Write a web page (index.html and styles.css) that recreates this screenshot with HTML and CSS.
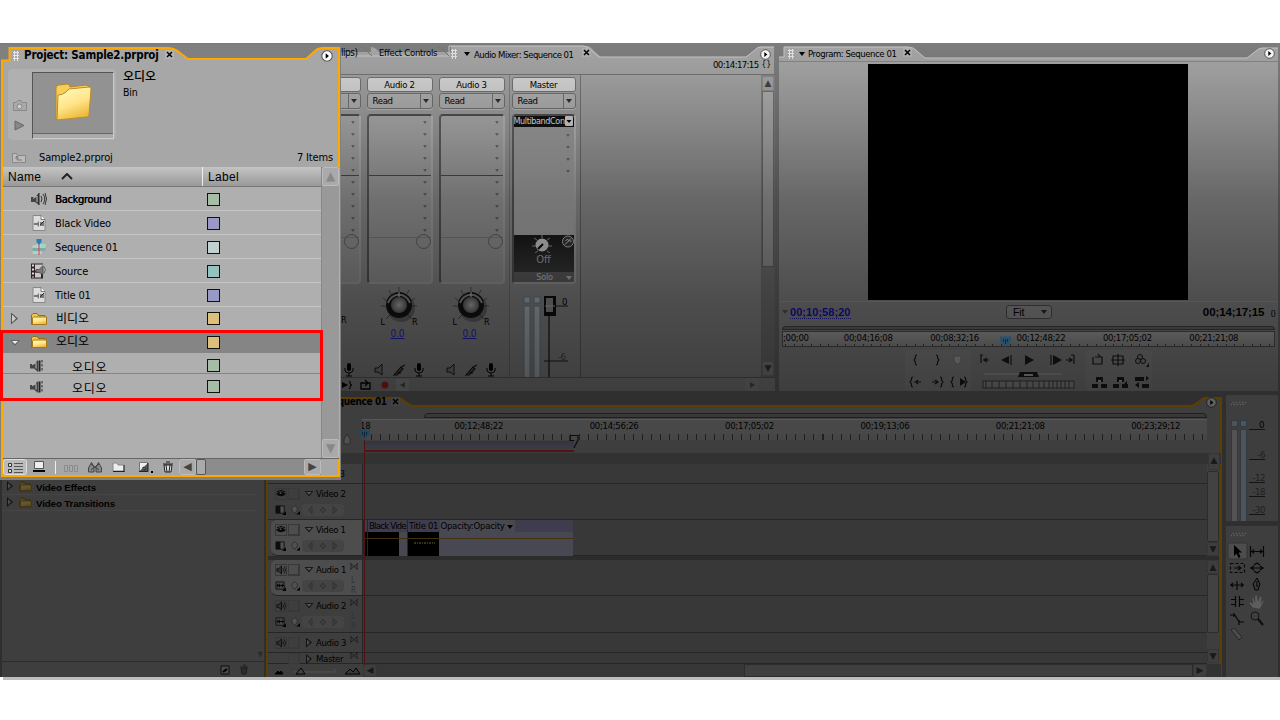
FILE: index.html
```html
<!DOCTYPE html>
<html lang="ko">
<head>
<meta charset="utf-8">
<title>Sample2.prproj</title>
<link rel="stylesheet" href="styles.css">
</head>
<body>
<svg class="defs" width="0" height="0">
  <defs>
    <linearGradient id="gold" x1="0" y1="0" x2="0.4" y2="1"><stop offset="0" stop-color="#fffcc0"/><stop offset=".6" stop-color="#ffe58a"/><stop offset="1" stop-color="#eebc3e"/></linearGradient>
    <radialGradient id="knobface"><stop offset="0" stop-color="#ddd"/><stop offset="1" stop-color="#777"/></radialGradient>
  </defs>
  <symbol id="folder" viewBox="0 0 16 14"><path d="M.5 12.5V3L2 1.500h4L7.500 3.500H14V12.500z" fill="#f0c64f" stroke="#9a6c10"/><path d="M1.500 12.500V6l1-1H15.500V12.500z" fill="url(#gold)" stroke="#a87818"/></symbol>
  <symbol id="speaker" viewBox="0 0 16 14"><path d="M0 5h4l4-4v12L4 10H0z" fill="#444"/><path d="M8 1v12" stroke="#222"/><path d="M2 6.500l4-2.500v6" fill="none" stroke="#bbb"/><path d="M10 4q2 3 0 6M12 2q3.500 5 0 10M14 1q3 6 0 12" fill="none" stroke="#333"/></symbol>
  <symbol id="spk" viewBox="0 0 14 14"><path d="M0 5h4l4-4v12L4 9.500H0z" fill="#444"/><path d="M2 6l4-2.500v6" fill="none" stroke="#bbb"/><path d="M9.500 1.500v11" stroke="#222" stroke-width="2"/><path d="M12 1v12" stroke="#555" stroke-width="1.500" stroke-dasharray="2.500 1.500"/></symbol>
  <symbol id="doc" viewBox="0 0 14 16"><path d="M1 .5H9L13 4.500V15.500H1z" fill="#ddd" stroke="#888"/><path d="M9 .5V4.500H13" fill="#fff" stroke="#777"/><path d="M2 8h3l2-2v6l-2-2H2zM8 7h4v4H8z" fill="#777"/><path d="M8 10l4-4" stroke="#333"/></symbol>
  <symbol id="seq" viewBox="0 0 15 16"><path d="M1 6h4v3H1zM10 5h4v4h-4zM1 12h4v3H1z" fill="#9db"/><path d="M5 5h5v10H5z" fill="#bdd0d3"/><path d="M1 9h13v3H1z" fill="#87a6a8"/><path d="M7.500 4v12" stroke="#c44"/><path d="M5 0h5v3L7.500 6 5 3z" fill="#247fba"/></symbol>
  <symbol id="film" viewBox="0 0 16 15"><path d="M0 0h12v15H0z" fill="#322"/><path d="M1 1h2v2H1zM1 5h2v2H1zM1 9h2v2H1zM1 13h2v1H1z" fill="#ddd"/><path d="M4 1h8v6H4zM4 9h6v5H4z" fill="#c9c9c9"/><path d="M5 6h3l4-4v9L8 9H5z" fill="#777" stroke="#444" stroke-width=".7"/><path d="M13 3q3 3 0 7" fill="none" stroke="#666"/></symbol>
  <symbol id="eye" viewBox="0 0 11 10"><path d="M0 5q5.500-5.500 11 0-5.500 5-11 0z" fill="#1a1a1a"/><circle cx="5" cy="4" r="1" fill="#ddd"/><path d="M1 2.500q4.500-3 9 0" fill="none" stroke="#111"/></symbol>
  <symbol id="snd" viewBox="0 0 11 10"><path d="M1 3.500h2l3-3v9l-3-3H1z" fill="#888" stroke="#222"/><path d="M7.500 3q1.500 2 0 4M9 1q3 4 0 8" fill="none" stroke="#333"/></symbol>
  <symbol id="disp" viewBox="0 0 12 11"><path d="M1 1h9v8H1z" fill="#ddd" stroke="#222"/><path d="M1 1h5v8H1z" fill="#222"/><path d="M12 7v4H8z"/></symbol>
  <symbol id="wave" viewBox="0 0 12 11"><path d="M1 1h9v8H1z" fill="#ccc" stroke="#222"/><path d="M2 5h8M3 3v4M5 3v4M8 3v4" stroke="#000"/><path d="M12 7v4H8z"/></symbol>
  <symbol id="key" viewBox="0 0 10 10"><path d="M4 0l3 3v2L4 9 1 5V3z" fill="#ddd" stroke="#555" stroke-width=".7"/><path d="M10 6v4H6z"/></symbol>
  <symbol id="keys" viewBox="0 0 42 12"><rect width="42" height="12" rx="4" fill="#b8b8b8"/><path d="M10 2v8L6 6zM31 2v8l4-4zM21 3l3 3-3 3-3-3z" fill="#a4a4a4" stroke="#8a8a8a"/></symbol>
  <symbol id="bow" viewBox="0 0 8 7"><path d="M0 0l8 7M8 0L0 7M1 1v5M7 1v5" fill="none" stroke="#444" stroke-width=".8"/></symbol>
  <symbol id="go" viewBox="0 0 11 11"><circle cx="5.500" cy="5.500" r="4.800" fill="#fff" stroke="#555"/><path d="M4.300 3v5l3-2.500z"/></symbol>
  <symbol id="close" viewBox="0 0 9 9"><rect width="9" height="9" rx="1" fill="#b4b4b4"/><path d="M2 2l5 5M7 2L2 7" stroke="#000" stroke-width="1.500"/></symbol>
  <symbol id="knob" viewBox="0 0 50 44"><g stroke="#444" stroke-width=".7"><path d="M25 1v6M15 4l2 4M35 4l-2 4M9 12l4 3M41 12l-4 3M7 20h5M38 20h5M12 33l4-4M38 33l-4-4"/></g><circle cx="27" cy="22" r="14" fill="#000" opacity=".25"/><circle cx="25" cy="19" r="13" fill="#181818"/><path d="M14 17a11.500 11.500 0 0 1 22 0" fill="none" stroke="#aaa" stroke-width="2"/><circle cx="25" cy="19" r="8" fill="url(#knobface)"/><path d="M25 6v5" stroke="#eee" stroke-width="1.200"/></symbol>
  <symbol id="mini" viewBox="0 0 64 14"><path d="M8 5h3l4-4v11l-4-3H8z" fill="#999" stroke="#222"/><path d="M27 12l7-8 2 2-6 6zM34 4l4-2M31 9l3 1" stroke="#111" stroke-width="1.100" fill="#777"/><rect x="50" y="0" width="4" height="8" rx="2"/><path d="M48 5v3q4 4 8 0V5M52 10v3M49 13h6" fill="none" stroke="#000"/></symbol>
  <symbol id="head" viewBox="0 0 11 12"><path d="M0 1l3 1 2.500-1L8 2l3-1v5.500L5.500 12 0 6.500z" fill="#62bfff"/><path d="M3.500 4v3M5.500 4v5M7.500 4v3" stroke="#1a5285" stroke-width=".8"/></symbol>
  <symbol id="grip" viewBox="0 0 18 5"><path d="M1 4l1-1M4 4l1-1M7 4l1-1M10 4l1-1M13 4l1-1M3 2l1-1M6 2l1-1M9 2l1-1M12 2l1-1M15 2l1-1" stroke="#fff" stroke-width="1.300"/></symbol>
</svg>

<main class="stage">
  <div class="workspace">
    <div class="upper">
      <section class="mixer">
        <svg class="outline" width="434" height="348"><path d="M0 9H30V4q4 0 8 5H110V3H245q5 0 8 5l7 6H405l9-7q2-3 6-3H433V348H0z" fill="#a8a8a8"/><path d="M0 13h108V3H242q4 0 8 4l8 7H405l9-7q2-3 6-3H433" fill="none" stroke="#ccc"/><path d="M20 4q4 0 6 4l5 5M97 4q4 0 6 4l5 5" fill="none" stroke="#777"/></svg>
        <div class="tabs"><span class="clips">lips)</span><span class="fxc">Effect Controls</span><i class="dots"></i><i class="down dark"></i><span class="amix">Audio Mixer: Sequence 01</span><svg class="x"><use href="#close"/></svg><svg class="menu"><use href="#go"/></svg></div>
        <div class="mtime"><span>00:14:17:15</span><small>{ }</small></div>
        <div class="mbody">
          <div class="strip partial"><div class="name"></div><div class="read"><i class="down"></i></div><div class="inserts"><div class="arrows"><i></i><i></i><i></i><i></i><i></i></div><div class="arrows sends"><i></i><i></i><i></i><i></i><i></i></div><div class="pan"><b></b></div></div><div class="pr">R</div><svg class="micp" viewBox="44 0 20 14"><use href="#mini" width="64" height="14"/></svg></div>
          <div class="strip"><div class="name">Audio 2</div><div class="read">Read<i class="down"></i></div><div class="inserts"><div class="arrows"><i></i><i></i><i></i><i></i><i></i></div><div class="arrows sends"><i></i><i></i><i></i><i></i><i></i></div><div class="pan"><b></b></div></div><svg class="knob"><use href="#knob"/></svg><div class="lr"><span>L</span><span>R</span></div><div class="val">0.0</div><svg class="mini"><use href="#mini"/></svg></div>
          <div class="strip"><div class="name">Audio 3</div><div class="read">Read<i class="down"></i></div><div class="inserts"><div class="arrows"><i></i><i></i><i></i><i></i><i></i></div><div class="arrows sends"><i></i><i></i><i></i><i></i><i></i></div><div class="pan"><b></b></div></div><svg class="knob"><use href="#knob"/></svg><div class="lr"><span>L</span><span>R</span></div><div class="val">0.0</div><svg class="mini"><use href="#mini"/></svg></div>
          <div class="master"><div class="name">Master</div><div class="read">Read<i class="down"></i></div>
            <div class="inserts"><div class="fx"><span>MultibandCon</span><svg width="8" height="10"><rect width="8" height="10" rx="1" fill="#ddd"/><path d="M1.500 4h5L4 7z"/></svg></div><div class="arrows"><i></i><i></i><i></i><i></i></div><div class="solo"><svg width="62" height="18"><g stroke="#bbb"><path d="M29 0v3M21 3l3 2M37 3l-3 2M19 11h4M35 11h4M22 18l3-2M37 18l-3-2"/></g><circle cx="29" cy="10" r="6.500" fill="#fff"/><path d="M25 14l5-5" stroke="#000" stroke-width="2"/><circle cx="55" cy="6.500" r="5.500" fill="#444" stroke="#ddd"/><path d="M52 9.500l6-6M52.500 6q2-3 3-1t3 1" stroke="#fff" fill="none"/></svg><span>Off</span><em>Solo<i class="down"></i></em></div></div>
            <svg class="meter" width="66" height="82"><g fill="#ddd" stroke="#789cb9"><rect x="12" y="1" width="6" height="6"/><rect x="22" y="1" width="6" height="6"/><rect x="12" y="10" width="6" height="80"/><rect x="22" y="10" width="6" height="80"/></g><path d="M37 0v82" stroke="#333" stroke-width="1.500"/><path d="M39 10h17M32 65h24" stroke="#222"/><rect x="32" y="-1" width="12" height="21" fill="#111"/><rect x="34" y="2" width="7" height="14" fill="#aaa"/><path d="M33 10h10" stroke="#ddd"/><text x="50" y="9">0</text><text x="46" y="64" fill="#555">-6</text></svg>
          </div>
          <div class="blank"></div>
          <div class="vs"><b>▲</b><i></i><b>▼</b></div>
        </div>
        <div class="mfoot"><svg width="90" height="14"><path d="M1 4l6 3-6 3z"/><path d="M8 3q2 0 1 3l2 1-2 1q1 3-1 3" stroke="#000" fill="none"/><path d="M24 5h-4v6h9V5h-3M22 5h4M24 2l3 3-3 3" fill="none" stroke="#000" stroke-width="1.300"/><circle cx="44" cy="7" r="3.500" fill="#d52828"/><rect x="55" y="1" width="13" height="12" rx="2" fill="#b8b8b8"/><path d="M64 4v6l-5-3z" fill="#666"/></svg><span></span><svg width="30" height="14"><rect width="14" height="13" rx="2" fill="#b0b0b0"/><path d="M5 4v6l5-3z" fill="#666"/></svg></div>
      </section>
      <section class="program">
        <svg class="outline" width="499" height="348"><path d="M0 14H5V4H129q6 0 10 5l7 6H468l9-7q3-3 6-3H499V348H0z" fill="#a8a8a8"/><path d="M0 14H5V4H129q6 0 10 5l7 6H468l9-7q3-3 6-3H499" fill="none" stroke="#ccc"/></svg>
        <div class="tabs"><i class="dots"></i><i class="down dark"></i><span>Program: Sequence 01</span><svg class="x"><use href="#close"/></svg><svg class="menu"><use href="#go"/></svg></div>
        <div class="view"><div class="screen"></div></div>
        <div class="ptime"><i class="down"></i><a>00;10;58;20</a><div class="fit">Fit<i class="down"></i></div><strong>00;14;17;15</strong><small>{ }</small></div>
        <div class="pbar"></div>
        <div class="pruler"><span>;00;00</span><span>00;04;16;08</span><span>00;08;32;16</span><span>00;12;48;22</span><span>00;17;05;02</span><span>00;21;21;08</span><svg class="phead"><use href="#head"/></svg></div>
        <svg class="transport" width="250" height="41">
          <g fill="#b0b0b0"><rect width="66" height="41" rx="4"/><rect x="181" width="66" height="41" rx="4"/></g>
          <g fill="none" stroke="#222" stroke-width="1.200"><path d="M12 5q-2 0-1.500 3l-1.500 2 1.500 2q-.5 3 1.500 3M31 5q2 0 1.500 3l1.500 2-1.500 2q.5 3-1.500 3M8 27q-2 0-1.500 3L5 32l1.500 2Q6 37 8 37M9 32h7M13 30l-2 2 2 2M27 32h6M30 30l3 2-3 2M35 27q2 0 1.500 3l1.500 2-1.500 2q.5 3-1.500 3M49 27q-2 0-1.500 3L46 32l1.500 2q-.5 3 1.500 3M59 27q2 0 1.500 3l1.500 2-1.500 2q.5 3-1.500 3M75 5h3M76 5v8M78 10h6M82 8l-3 2 3 2M161 10h6M164 8l3 2-3 2M169 5v9M166 5h3M146 5v10M106 5v10"/><path d="M188 7v7h9V7h-3M190 7h5l-2-3M208 6h10v8h-10zM206 10h14M213 4v12"/></g>
          <g fill="#222"><path d="M55 28v8l6-4zM104 6v8l-8-4zM120 5v10l9-5zM148 5v10l9-5zM241 17h3v-4zM187 34h6v4h-6zM196 34h6v4h-6zM191 27h7v5h-7zM208 34h6v4h-6zM217 34h6v4h-6zM212 27h7v5h-7zM222 31v6l-3-3zM230 27h9v4h-9zM237 34h7v4h-7zM241 26l3 2-3 3zM234 32v6l-4-3z"/></g>
          <path d="M193 30h3v2h-3zM214 30h3v2h-3z" fill="#ddd"/>
          <path d="M49 6h7v5l-3.500 4-3.500-4z" fill="#ddd" stroke="#999"/><g fill="#aaa" stroke="#222"><circle cx="235" cy="7" r="2.500"/><circle cx="233" cy="11" r="2.500"/><circle cx="238" cy="11" r="2.500"/></g>
          <path d="M79 24h78" stroke="#ccc" stroke-width="1.500"/><path d="M113 27l2-5h17l2 5z" fill="#222"/><path d="M119 25h9" stroke="#ddd" stroke-width="2"/>
          <rect x="78" y="31" width="91" height="7" fill="#bbb" stroke="#555"/><path d="M81 31v7M87 31v7M94 31v7M101 31v7M108 31v7M115 31v7M122 31v7M128 31v7M134 31v7M139 31v7M144 31v7M148 31v7M152 31v7M156 31v7M160 31v7M164 31v7" stroke="#555"/>
        </svg>
      </section>
    </div>
    <div class="lower">
      <section class="effects">
        <div class="frow"><i class="tri"></i><svg><use href="#folder"/></svg>Video Effects</div>
        <div class="frow"><i class="tri"></i><svg><use href="#folder"/></svg>Video Transitions</div>
        <div class="fblank"><b>▼</b></div>
        <div class="ffoot"><svg width="32" height="12"><path d="M2 2h8v8H2z" fill="#ccc" stroke="#222"/><path d="M4 8l4-3" stroke="#000" stroke-width="2"/><path d="M22 4h6l-1 6h-4zM21 3h8M24 1h3" fill="#777" stroke="#555"/></svg></div>
      </section>
      <section class="timeline">
        <svg class="outline" width="957" height="283"><path d="M1 283V3H131q4 0 8 4l7 4H924q4 0 7-3l4-3q2-2 5-2H955V283" fill="#a8a8a8" stroke="#ffa800" stroke-width="2"/></svg>
        <div class="ttab"><span>Sequence 01</span><svg class="x"><use href="#close"/></svg><svg class="menu"><use href="#go"/></svg></div>
        <div class="truler">
          <div class="trleft"><svg width="8" height="12"><path d="M4 1l3 5v5H1V6z" fill="#ddd" stroke="#777"/></svg></div>
          <div class="trmain"><div class="zoombar"></div><div class="labels"><em>18</em><span>00;12;48;22</span><span>00;14;56;26</span><span>00;17;05;02</span><span>00;19;13;06</span><span>00;21;21;08</span><span>00;23;29;12</span></div><div class="ticks"></div><div class="work"></div></div>
        </div>
        <div class="tband"><b>▲</b></div>
        <div class="tracks">
          <div class="heads">
            <div class="th v3"><span>Video 3</span></div>
            <div class="th v2"><svg class="ic"><use href="#eye"/></svg><u></u><i class="open"></i><span>Video 2</span><div class="sub"><svg class="ds"><use href="#disp"/></svg><svg class="ky"><use href="#key"/></svg><svg class="ks"><use href="#keys"/></svg></div></div>
            <div class="th v1 lit"><svg class="ic"><use href="#eye"/></svg><u></u><i class="open"></i><span>Video 1</span><div class="sub"><svg class="ds"><use href="#disp"/></svg><svg class="ky"><use href="#key"/></svg><svg class="ks"><use href="#keys"/></svg></div></div>
            <div class="split"></div>
            <div class="th a1 lit"><svg class="ic"><use href="#snd"/></svg><u></u><i class="open"></i><span>Audio 1</span><svg class="bow"><use href="#bow"/></svg><div class="sub"><svg class="ds"><use href="#wave"/></svg><svg class="ky"><use href="#key"/></svg><svg class="ks"><use href="#keys"/></svg><small>L<br>R</small></div></div>
            <div class="th a2"><svg class="ic"><use href="#snd"/></svg><u></u><i class="open"></i><span>Audio 2</span><svg class="bow"><use href="#bow"/></svg><div class="sub"><svg class="ds"><use href="#wave"/></svg><svg class="ky"><use href="#key"/></svg><svg class="ks"><use href="#keys"/></svg><small>L<br>R</small></div></div>
            <div class="th a3"><svg class="ic"><use href="#snd"/></svg><u></u><i class="tri"></i><span>Audio 3</span><svg class="bow"><use href="#bow"/></svg></div>
            <div class="th ms"><svg class="ic none"></svg><u></u><i class="tri"></i><span>Master</span><svg class="bow"><use href="#bow"/></svg></div>
          </div>
          <div class="lanes"><div class="v3"></div><div class="v2"></div><div class="v1"><div class="clip c0"></div><div class="clip c1"><span>Black Vide</span><b></b></div><div class="clip c2"><span>Title 01 <mark>Opacity:Opacity<i class="down dark"></i></mark></span><b><svg width="31" height="24"><path d="M6 11h21" stroke="#8f8d35" stroke-width="2" stroke-dasharray="2 1 1 1"/></svg></b></div></div><div class="split"></div><div class="a1"></div><div class="a2"></div><div class="a3"></div><div class="ms"></div></div>
          <div class="tscroll"><i class="t1"></i><b>▼</b><div class="split"></div><b>▲</b><i class="t2"></i><span></span><b>▼</b></div>
        </div>
        <div class="tfoot"><svg width="95" height="13"><path d="M7 10l3-3 2 2 1-2 2 3z" stroke="#000"/><path d="M26 8h41V5" fill="none" stroke="#ddd"/><path d="M28 10l5-6 4 6z" fill="#bbb" stroke="#000"/><path d="M77 10l5-5 3 3 3-4 4 6z" fill="#999" stroke="#000"/></svg><b>◀</b><span></span><i></i><b>▶</b></div>
        <svg class="cursor" width="11" height="237"><path d="M5.500 11V237" stroke="#d53030"/><use href="#head" width="11" height="12"/></svg>
        <svg class="workend" width="10" height="14"><path d="M1 .5h8V5L5 13M1 .5v5h4" fill="none" stroke="#222" stroke-width="1.200"/></svg>
      </section>
      <aside class="side">
        <div class="vu"><svg width="52" height="126"><use href="#grip" x="4" y="6" width="18" height="5"/><g fill="#e0e0e0" stroke="#7a9ec0"><rect x="5.500" y="25.500" width="6" height="6"/><rect x="14.500" y="25.500" width="6" height="6"/><rect x="5.500" y="34.500" width="6" height="100"/><rect x="14.500" y="34.500" width="6" height="100"/></g><path d="M23 34.500h16M23 64.500h16M23 87.500h16M23 101.500h16M23 119.500h16" stroke="#333"/><g text-anchor="end"><text x="38" y="33">0</text><g fill="#555"><text x="39" y="63">-6</text><text x="39" y="86">-12</text><text x="39" y="100">-18</text><text x="39" y="118">-30</text></g></g></svg></div>
        <div class="tools"><svg width="52" height="151"><use href="#grip" x="4" y="6" width="18" height="5"/><rect x="2" y="17" width="19" height="16" rx="1" fill="#d0d0d0" stroke="#888"/><path d="M8 19v11l2.500-2.500 2 4.500 2-1-2-4.500h3.500z"/>
          <g fill="none" stroke="#111" stroke-width="1.200"><path d="M24.500 20v11M37.500 20v11M25 25.500h12M28 23.500l-2 2 2 2M34 23.500l2 2-2 2"/><path d="M4.500 37.500h14v9H4.500z" stroke-dasharray="3 2"/><path d="M8 42h7M12 40l3 2-3 2M24 42h14M28 40l-3 2 3 2M34 40l3 2-3 2M28 39l3-2 3 2M28 45l3 2 3-2M4 59h14M11 55v9M7 57l-2 2 2 2M15 57l2 2-2 2"/><path d="M5 73.500h4M13 73.500h5M5 78.500h4M13 78.500h5M9.500 70v11M13.500 70v11M4 89h5l4 7h5M8 87v4M13 94v5"/></g>
          <path d="M31 52l3 6-2 6h-3l-2-6z" fill="#999" stroke="#000"/><path d="M31 55v6" stroke="#000"/><path d="M27 82l-4-5 2-1 2 2-1-7 2 1 1 4V69h2l1 6 2-5 2 1-1 6 2-3 1 1-4 8z" fill="#fff" stroke="#888" stroke-width=".4"/><circle cx="29" cy="90" r="4" fill="#aaa" stroke="#333"/><path d="M32 93l5 6" stroke="#222" stroke-width="2"/><path d="M5 104l3-2 8 9-3 3z" fill="#ccc" stroke="#666"/></svg></div>
      </aside>
    </div>
    <div class="shade"></div>
  </div>

  <section class="bin">
    <svg class="outline" width="342" height="437"><path d="M0 2H341V437H0z" fill="#808080"/><path d="M2 433V17.500H9.500V5H166q9 0 14 5l8 6H306l9-8q3-3 8-3H339V433z" fill="#a7a7a7" stroke="#ffa800" stroke-width="2"/></svg>
    <div class="btitle"><i class="dots"></i><span>Project: Sample2.prproj</span><svg class="x"><use href="#close"/></svg><svg class="menu"><use href="#go"/></svg></div>
    <div class="preview">
      <div class="pframe"><svg width="22" height="66"><g fill="#aaa" stroke="#888"><path d="M3.500 30.500H6l2-2h3l1 2h4.500v8h-13z"/><circle cx="9.500" cy="34.500" r="2.500" fill="#ccc"/><path d="M5 49v9l9-4.500z" fill="#888" stroke="#666"/></g></svg>
      <div class="thumb"><svg width="80" height="60" viewBox="0 0 80 60"><path d="M23 46V15q0-3 3-3l8-1q3 0 3 3l16-2q3 0 3 3v23L24 47z" fill="#f3cf59" stroke="#bb8525"/><path d="M24 47l1-25q5 0 8-3l3-3 20-2q2 0 2 2l-2 26q0 2-3 2z" fill="url(#gold)" stroke="#bd8b2a"/></svg><i></i></div></div>
      <div class="binfo"><b>오디오</b><span>Bin</span></div>
    </div>
    <div class="path"><svg width="16" height="13"><path d="M1.500 11.500V2.500h4l1 2h8v7z" fill="#bbb" stroke="#888"/><path d="M6 9h5M6 9V6M4.500 7.500L6 5l1.500 2.500" fill="none" stroke="#777"/></svg><span>Sample2.prproj</span><em>7 Items</em></div>
    <div class="list">
      <div class="rows">
        <div class="hdr"><span>Name<svg width="12" height="7"><path d="M1 6l5-5 5 5" fill="none" stroke="#222" stroke-width="2"/></svg></span><span>Label</span></div>
        <div class="row"><svg><use href="#speaker"/></svg><b>Background</b><i class="g"></i></div>
        <div class="row"><svg><use href="#doc"/></svg><span>Black Video</span><i class="p"></i></div>
        <div class="row"><svg><use href="#seq"/></svg><span>Sequence 01</span><i class="l"></i></div>
        <div class="row"><svg><use href="#film"/></svg><span>Source</span><i class="t"></i></div>
        <div class="row"><svg><use href="#doc"/></svg><span>Title 01</span><i class="p"></i></div>
        <div class="row folderrow"><i class="tri"></i><svg><use href="#folder"/></svg><span>비디오</span><i class="o"></i></div>
        <div class="row folderrow sel"><i class="open"></i><svg><use href="#folder"/></svg><span>오디오</span><i class="o"></i></div>
        <div class="row kid"><svg><use href="#spk"/></svg><span>오디오</span><i class="g"></i></div>
        <div class="row kid"><svg><use href="#spk"/></svg><span>오디오</span><i class="g"></i></div>
      </div>
      <div class="bscroll"><b>▲</b><b>▼</b></div>
    </div>
    <div class="bfoot"><svg width="175" height="17"><rect x=".5" y=".5" width="23" height="15" rx="2" fill="#bbb" stroke="#ddd"/><path d="M5.500 4.500h3v3h-3zM5.500 10.500h3v3h-3z" fill="#ddd" stroke="#333"/><path d="M11 4.500h9M11 7.500h9M11 10.500h9M11 13.500h9" stroke="#555"/><path d="M31.500 2.500h9v7h-9z" fill="#eee" stroke="#555"/><path d="M30 12h12" stroke="#000" stroke-width="2"/><path d="M52.500 2v13" stroke="#eee"/><path d="M61.500 6.500h3v6h-3zM66.500 6.500h3v6h-3zM71.500 6.500h3v6h-3z" fill="#aaa" stroke="#8a8a8a"/><path d="M85.500 13V9l3-5.500L91 8v5zM93 13V8l2.500-4.500 3 5.500v4zM88 5l8 6M96 5l-8 6" fill="#888" stroke="#444"/><path d="M110 4h4l1 2h6v6h-11z" fill="#eee" stroke="#888"/><path d="M110 12.500h11.500M121 6v7" stroke="#222"/><path d="M136.500 3.500h8v9h-8z" fill="#eee" stroke="#777"/><path d="M136 12.500h9V4M140 8l2 1v2l-2-1z" stroke="#222" fill="#555"/><path d="M148 12h2v2h-2z"/><path d="M161 6h8l-1 7h-6zM160 5h10M163 3h4" fill="#ddd" stroke="#222"/><path d="M163 6l1 7M167 6l-1 7" stroke="#222"/></svg><div class="hs"><b>◀</b><i></i><span></span><b>▶</b></div></div>
    <div class="redbox"></div>
  </section>
</main>
</body>
</html>
```
FILE: styles.css
```css
*{box-sizing:border-box}
body{margin:0;width:1280px;height:720px;background:#fff;overflow:hidden;font:11px "DejaVu Sans Condensed","DejaVu Sans","Noto Sans CJK KR",sans-serif;font-stretch:condensed;color:#000;letter-spacing:-.15px;white-space:nowrap}
svg{display:block;flex:none}
svg text{font-size:9.500px;letter-spacing:-.5px}
.defs{position:absolute}
i,em{font-style:normal}
.stage{position:relative;margin-top:43px;height:637px;background:linear-gradient(90deg,#fff 3px,#bfbcc0 3px)}
.workspace{position:relative;height:634px;background:#7f7f7f;overflow:hidden}
.shade{position:absolute;inset:0;background:linear-gradient(rgba(0,0,0,.02),rgba(0,0,0,.07) 27px,rgba(0,0,0,.22) 90px,rgba(0,0,0,.39) 157px,rgba(0,0,0,.54) 257px,rgba(0,0,0,.63) 345px)}
.outline{position:absolute;left:0;top:0;z-index:0}
.upper{display:flex;gap:4px;height:352px;padding-left:341px}
.mixer,.program{position:relative;height:348px;display:flex;flex-direction:column}
.mixer{width:434px}
.program{width:499px}
.mixer>div,.program>div,.transport,.timeline>div,.bin>div{position:relative;flex:none}
.tabs{display:flex;align-items:center;height:18px;padding-top:4px;font-size:10px;letter-spacing:-.5px}
.clips{width:38px;margin-top:-3px}
.fxc{width:72px;margin-top:-3px;font-size:9.500px;letter-spacing:-.3px}
.dots{width:6px;height:10px;background:radial-gradient(circle,#e8e8e8 1px,transparent 1.2px) 0 0/3px 3px}
.down{display:inline-block;border:3px solid transparent;border-top:4px solid #333;border-bottom:0}
.down.dark{border-top-color:#000}
.mixer .down.dark{margin:0 4px 0 7px}
.amix{width:103px;font-size:9.500px}
.x{width:9px;height:9px;margin-left:5px;margin-top:-3px}
.menu{width:11px;height:11px;margin-left:auto}
.mixer .menu{margin-right:4px}
.mtime{height:14px;border-bottom:1px solid #777;display:flex;justify-content:flex-end;align-items:flex-start;gap:3px;font-size:9.500px;line-height:8px;letter-spacing:-.6px;padding-right:5px}
small{font-size:8px;letter-spacing:-1px}
.mbody{display:flex;height:302px}
.strip,.master{width:66px;padding-top:2px;display:flex;flex-direction:column;margin-right:6px}
.strip.partial{width:19.500px;margin-right:6px}
.name{height:15px;border:1px solid #777;border-radius:3px;background:#dcdcdc;text-align:center;line-height:13px;font-size:9.500px;letter-spacing:-.3px;flex:none}
.read{height:16px;margin-top:1px;border:1px solid #777;border-radius:3px;line-height:13px;padding-left:5px;display:flex;justify-content:space-between;font-size:9.500px;letter-spacing:-.3px;flex:none;box-shadow:0 1px #c4c4c4;background:linear-gradient(90deg,transparent calc(100% - 12px),#777 0 calc(100% - 11px),transparent 0),#b8b8b8}
.read .down{margin:5px 3px 0 0}
.strip.partial .name,.strip.partial .read{border-left:0;border-radius:0 3px 3px 0;justify-content:flex-end}
.inserts{height:170px;margin-top:5px;border:2px solid #c4c4c4;border-left:2px solid #666;border-top-color:#555;border-radius:4px;background:#b6b6b6;flex:none;overflow:hidden}
.arrows{height:59px;padding:5px 4px 0 0;display:flex;flex-direction:column;align-items:flex-end;gap:9px}
.arrows i{border:2px solid transparent;border-top:3px solid #777;border-bottom:0}
.arrows.sends{height:62px;border-top:1px solid #555}
.pan{border-top:1px solid #999;display:flex;justify-content:flex-end}
.pan b{width:15px;height:15px;border:1px solid #777;border-radius:50%;margin-top:-4px}
.strip.partial .inserts{border-left:0;border-radius:0 4px 4px 0}
.pr{text-align:left;padding-top:31px;font-size:9px;height:79px}
.micp{width:20px;height:14px}
.knob{width:50px;height:44px;margin:2px 0 0 7px}
.lr{display:flex;justify-content:space-between;padding:0 15px 0 14px;font-size:9px;line-height:10px;margin-top:-13px}
.val{color:#2a2af0;text-decoration:underline;text-align:center;padding:0 4px 0 0;line-height:13px;font-size:10px;height:39px}
.mini{width:64px;height:14px}
.master{padding-left:2px;margin:0 2px 0 -2px;border-left:1px solid #888;border-right:1px solid #777;width:72px;padding-right:4px}
.master .inserts{background:linear-gradient(#a4a4a4,#ddd)}
.fx{height:12px;background:#111;color:#eee;display:flex;font-size:9px;line-height:12px;align-items:center;justify-content:space-between;padding-right:1px;margin-top:-1px;letter-spacing:-.4px}
.master .arrows{height:108px;flex:none}
.master .arrows{padding-top:7px}
.solo{height:48px;background:linear-gradient(#202020,#505050);color:#ccc;display:flex;flex-direction:column;align-items:center}
.solo span{line-height:14px}
.solo em{width:100%;background:#757575;margin-top:5px;font-size:9px;line-height:11px;text-align:center;color:#eee;padding-left:12px}
.solo .down{float:right;margin:4px 2px;border-top-color:#ddd}
.meter{margin-top:12px;overflow:hidden}
.blank{flex:1}
.vs{width:14px;display:flex;flex-direction:column;background:#8d8d8d;border:1px solid #888}
.vs b,.bscroll b,.tscroll b,.tband b,.tfoot b,.hs b{font:9px/13px "DejaVu Sans";text-align:center;color:#444;background:#a8a8a8;border:1px solid #909090;border-radius:2px;flex:none}
.vs i{height:176px;background:#b4b4b4;border:1px solid #777}
.vs b:last-child{margin-top:auto}
.mfoot{height:14px;border-top:1px solid #777;display:flex;background:#a8a8a8}
.mfoot span{flex:1}
.program .tabs{padding:3px 2px 0 9px;height:19px;border-bottom:1px solid #888}
.program .tabs span{font-size:9.500px;width:90px;letter-spacing:-.45px}
.program .down.dark{margin:0 3px 0 5px}
.program .tabs .menu{margin-right:1px;margin-top:0}
.view{height:240px;padding:2px 0 0 89px;border-bottom:1px solid #bbb}
.screen{width:320px;height:236px;background:#000}
.ptime{height:20px;display:flex;align-items:center;padding:0 3px 0 3px;font-family:"Liberation Sans";letter-spacing:-.1px}
.ptime a{font:bold 11px "Liberation Sans";color:#2012d8;margin-left:2px;border-bottom:1px dotted #22c;width:61px;letter-spacing:.05px}
.ptime>.down{border-top-color:#666}
.fit{width:46px;height:14px;margin-left:155px;border:1px solid #666;border-radius:3px;background:#b8b8b8;display:flex;justify-content:space-between;padding:0 4px 0 6px;line-height:12px;align-items:center;font-size:10.500px}
.ptime strong{margin-left:auto;font-size:11.500px;margin-right:6px}
.pbar{height:4px;margin:4px 3px 0;background:#888;border:1px solid #555;border-radius:4px 4px 0 0}
.pruler{height:16px;margin:1px 3px 0;display:flex;border:1px solid #666;background:repeating-linear-gradient(90deg,#555 0 1px,transparent 1px 8.64px) 2px 100%/100% 2px no-repeat,linear-gradient(#d2d2d2,#b8b8b8)}
.pruler span{width:86.400px;text-align:center;font-size:9.500px;line-height:11px;flex:none;letter-spacing:-.3px}
.pruler span:first-child{width:42px;text-align:left}
.phead{position:absolute;left:217px;top:3px;width:11px;height:12px}
.transport{margin:3px 0 0 126px}
.lower{display:flex;height:282px}
.effects{width:264px;padding:84px 0 0 2px;display:flex;flex-direction:column;background:linear-gradient(90deg,#7f7f7f 2px,#a8a8a8 2px)}
.frow{height:16px;border-bottom:1px solid #bbb;margin-right:7px;display:flex;align-items:center;font:bold 9.800px "Liberation Sans";letter-spacing:-.15px;flex:none;padding-top:1px}
.frow svg{width:13px;height:11px;margin:-2px 4px 0 6px}
.frow .tri{margin:-2px 0 0 5px}
.tri{width:6px;height:10px;background:#333;clip-path:polygon(0 0,100% 50%,0 100%);flex:none;position:relative}
.tri:after{content:"";position:absolute;inset:2px 2px 2px 1px;background:#ccc;clip-path:polygon(0 0,100% 50%,0 100%)}
.open{width:10px;height:6px;background:#444;clip-path:polygon(0 0,100% 0,50% 100%);flex:none;position:relative}
.open:after{content:"";position:absolute;inset:1px 2px 2px;background:#eee;clip-path:polygon(0 0,100% 0,50% 100%)}
.fblank{height:151px;border-bottom:1px solid #777;display:flex;align-items:flex-end;justify-content:flex-end;font-size:8px}
.fblank b{color:#777;border:1px solid #aaa;height:12px}
.ffoot{height:15px;padding:2px 0 0 217px}
.timeline{width:957px;margin-left:2px;position:relative;display:flex;flex-direction:column}
.ttab{display:flex;height:16px;align-items:center;padding:0 3px 4px 60px;font-weight:bold;font-size:10px;letter-spacing:-.4px}
.ttab .menu{margin:3px 3px 0 auto}
.ttab .x{margin:0 0 0 4px}
.truler{height:42px;display:flex;padding-left:2px}
.trleft{width:94px;padding:22px 0 0 75px}
.trmain{width:845px;overflow:hidden}
.zoombar{height:5px;margin:2px 0 1px 62px;border:1px solid #555;border-radius:4px 4px 0 0;background:#999}
.labels{height:15px;display:flex;background:#c4c4c4;border-top:1px solid #eee;font-size:9.500px;letter-spacing:-.3px;line-height:12px}
.labels em{width:49px;flex:none;text-indent:-2px}
.labels span{width:135.400px;flex:none;text-align:center}
.ticks{height:6px;background:repeating-linear-gradient(90deg,#555 0 1px,transparent 1px 9.030px) 9px 0/100% 6px no-repeat,#bcbcbc}
.work{height:11px;margin:1px 0 0 2px;width:210px;background:linear-gradient(#8e8ea7,#a4a4c2);border-bottom:2px solid #e03434}
.tband{height:11px;display:flex;justify-content:flex-end;background:#888;margin:0 2px}
.tband b{width:12px;height:17px;margin-right:1px}
.tracks{height:200px;display:flex;margin:0 2px;overflow:hidden}
.heads{width:94px}
.lanes{width:845px;background:#989898;border-left:1px solid #666}
.lanes>div{border-bottom:1px solid #666}
.v3{height:20px}.v2{height:36px}.v1{height:36px}.split.split{height:4px;background:#777;border:0}.a1{height:36px}.a2{height:37px}.a3{height:20px}.ms{height:11px}
.th{display:flex;flex-wrap:wrap;align-content:flex-start;align-items:center;border-bottom:1px solid #666;padding:2px 0 0 7px;font-size:9.500px;letter-spacing:-.35px}
.lit{background:#d0d0d0;border-radius:6px 0 0 6px;margin-left:3px;padding-left:4px}
.th.v3{padding-left:47px}
.ic{width:12px;height:12px;border:1px solid #959595}
.ic.none{border:0}
.th u{width:12px;height:12px;border:1px solid #999;border-width:1px 2px 2px 1px;margin:0 4px 0 1px}
.th>.open,.th>.tri{margin-right:2px}
.th>.tri{margin-left:2px;margin-right:4px}
.th span{line-height:15px;width:33px}
.th.ms{padding-top:0}
.th.ms span{line-height:12px}
.bow{width:8px;height:7px;margin:-7px 0 0 1px}
.sub{display:flex;width:86px;height:18px;align-items:center}
.ds{width:11px;height:10px;margin-right:5px}.ky{width:9px;height:10px;margin-right:2px}.ks{width:42px;height:12px}
.sub small{font-size:8px;line-height:10px;color:#888;margin-left:7px}
.lanes .v1{display:flex}
.clip{height:36px;background:linear-gradient(#aaa6d0 12px,#c3c3e2 12px);border-left:1px solid #666;font-size:9.500px;letter-spacing:-.35px;line-height:12px;flex:none;position:relative}
.clip:after{content:"";position:absolute;left:0;right:0;top:18px;height:1px;background:#b58123}
.clip b{display:block;width:31px;height:24px;background:#000}
.c0{width:4px;background:linear-gradient(#aaa6d0 12px,#000 12px)}.c1{width:40px}.c2{width:166px}
.c1 span{letter-spacing:-.75px}
.clip span{padding-left:1px;display:block;height:12px}
.clip mark{background:#c4c4da;display:inline-block;height:12px;letter-spacing:-.25px}
.clip .down{vertical-align:middle;margin:0 2px}
.tscroll{width:12px;display:flex;flex-direction:column}
.tscroll i{background:#b3b3b3;border:1px solid #777;border-radius:2px;flex:none}
.t1{height:71px;margin-top:7px}.t2{height:59px}.tscroll b{height:14px}.tscroll span{height:16px}
.tfoot{height:13px;margin:0 2px;display:flex;padding-right:14px;background:#888}
.tfoot svg{background:#a8a8a8}
.tfoot b{width:14px;line-height:11px}.tfoot span{width:367px;background:#939393}.tfoot i{width:449px;background:#aaa;border:1px solid #777}
.cursor{position:absolute;left:93px;top:33px}
.workend{position:absolute;left:303px;top:40px}
.side{width:52px;margin-left:3px;display:flex;flex-direction:column;gap:5px}
.vu,.tools{background:#a8a8a8;height:126px;overflow:hidden}
.tools{height:151px}
.bin{position:absolute;left:0;top:0;width:342px;height:437px;display:flex;flex-direction:column}
.btitle{height:25px;display:flex;align-items:center;padding:0 9px 0 13px;font-weight:bold;font-size:11.500px;letter-spacing:-.2px}
.btitle span{margin-left:5px;padding-bottom:2px;width:135px}.btitle .x{margin:-3px 0 0 6px}.btitle .menu{width:12px;height:12px;margin-top:1px;margin-right:0}
.preview{display:flex;height:75px;padding-left:8px;margin-top:1px}
.pframe{display:flex;width:108px;height:71px;background:#b0b0b0;border-radius:4px;padding:3px 1px 0 2px}
.thumb{width:82px;height:67px;background:#929292;border:1px solid #555;border-right-color:#ccc;border-bottom-color:#ccc}
.thumb i{display:block;height:5px;background:#aaa;border-top:1px solid #666}
.binfo{display:flex;flex-direction:column;padding-left:7px}
.binfo b{font:500 12px/14px "Noto Sans CJK KR",sans-serif;letter-spacing:0}
.binfo span{line-height:18px;font-size:10.500px}
.path{height:23px;display:flex;align-items:center;padding:3px 9px 0 11px}
.path span{margin-left:12px;flex:1}
.list{display:flex;height:292px;margin:0 3px 0 3px;background:#afafaf;border-bottom:1px solid #666}
.rows{width:318px}
.hdr{height:20px;background:linear-gradient(#c4c4c4,#999);border-bottom:1px solid #777;display:flex;font:12px/18px "Liberation Sans";letter-spacing:.3px}
.hdr span{width:199px;padding-left:5px;display:flex;align-items:center;gap:20px}
.hdr span+span{width:119px;border-left:1px solid #eee}
.row{height:24px;border-bottom:1px solid #c6c6c6;display:flex;align-items:center;padding:1px 0 0 28px;position:relative}
.row svg{width:16px;height:16px;margin-right:8px}
.row span,.row b{width:152px}
.row b{font-weight:normal;text-shadow:.4px 0 #000;letter-spacing:-.3px}
.row i:last-child{width:13px;height:13px;border:1px solid #111;background:#a5bca7}
.row i.p.p{background:#9999c5}.row i.l.l{background:#c2d0d0}.row i.t.t{background:#96c1bd}.row i.o.o{background:#dcc07c}
.folderrow.folderrow{padding:0 0 0 8px}
.folderrow>.tri{margin:0 13px 0 0;height:12px;width:7px;background:#555}
.folderrow>.open{margin:2px 11px 0 -1px;background:#666}
.folderrow span{font:12px/14px "Noto Sans CJK KR",sans-serif;padding:0 0 2px 1px;letter-spacing:-.1px}
.sel{background:#858585;border:0;height:22px}
.row.kid{height:21px;border-color:#858585;padding:5px 0 0 27px}
.kid svg{width:14px;height:14px;margin-right:28px}
.kid span{width:135px;padding-top:2px;font:12px/14px "Noto Sans CJK KR",sans-serif;letter-spacing:.7px}
.kid:last-child.kid{border:0;padding-top:4px}
.bscroll{flex:1;background:#999;display:flex;flex-direction:column;justify-content:space-between;border-left:1px solid #888}
.bscroll b{height:19px;line-height:17px;font-size:12px;border-color:#bbb;background:#aaa;color:#888}
.bfoot{height:17px;display:flex;margin:0 3px}
.hs{display:flex;width:142px;height:16px;background:#8c8c8c;margin-left:1px}
.hs b{width:17px;border-color:#bbb;font-size:11px;background:#aaa;line-height:14px}
.hs i{width:10px;background:#aaa;border:1px solid #555;border-radius:2px}
.hs span{flex:1}
.bin .redbox{position:absolute;left:0;top:287px;width:323px;height:71px;border:3px solid #f00}
```
